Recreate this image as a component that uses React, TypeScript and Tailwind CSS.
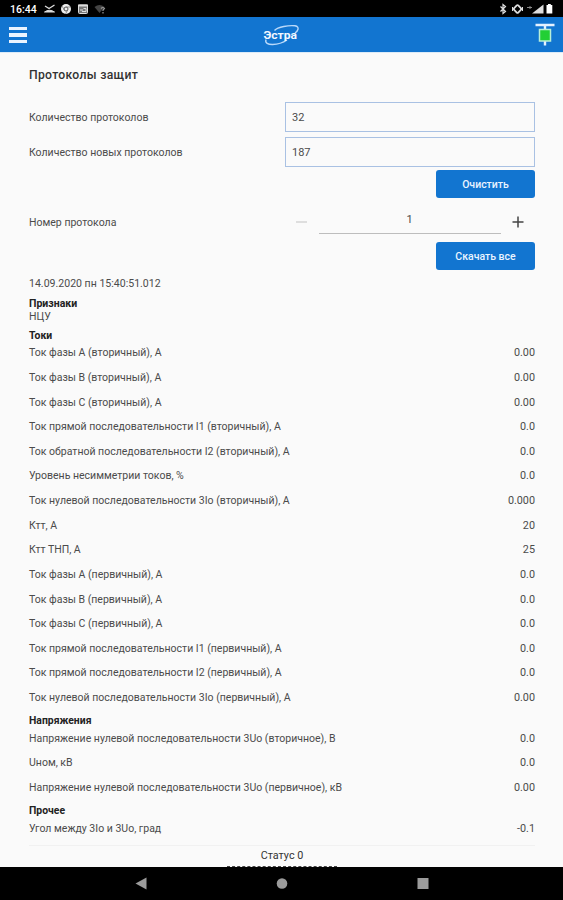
import { ReactNode } from "react";

interface Reading {
    label: string;
    value: string;
}

const currents: Reading[] = [
    { label: "Ток фазы А (вторичный), А", value: "0.00" },
    { label: "Ток фазы В (вторичный), А", value: "0.00" },
    { label: "Ток фазы С (вторичный), А", value: "0.00" },
    { label: "Ток прямой последовательности I1 (вторичный), А", value: "0.0" },
    { label: "Ток обратной последовательности I2 (вторичный), А", value: "0.0" },
    { label: "Уровень несимметрии токов, %", value: "0.0" },
    { label: "Ток нулевой последовательности 3Io (вторичный), А", value: "0.000" },
    { label: "Ктт, А", value: "20" },
    { label: "Ктт ТНП, А", value: "25" },
    { label: "Ток фазы А (первичный), А", value: "0.0" },
    { label: "Ток фазы В (первичный), А", value: "0.0" },
    { label: "Ток фазы С (первичный), А", value: "0.0" },
    { label: "Ток прямой последовательности I1 (первичный), А", value: "0.0" },
    { label: "Ток прямой последовательности I2 (первичный), А", value: "0.0" },
    { label: "Ток нулевой последовательности 3Io (первичный), А", value: "0.00" },
];

const voltages: Reading[] = [
    { label: "Напряжение нулевой последовательности 3Uo (вторичное), В", value: "0.0" },
    { label: "Uном, кВ", value: "0.0" },
    { label: "Напряжение нулевой последовательности 3Uo (первичное), кВ", value: "0.00" },
];

const other: Reading[] = [{ label: "Угол между 3Io и 3Uo, град", value: "-0.1" }];

function StatusBar() {
    return (
        <div className="flex h-[17px] shrink-0 items-center justify-between bg-black pr-[9px] pl-[10px] text-white">
            <div className="flex items-center">
                <span className="w-[33px] pt-px text-[10.5px] leading-[17px] font-medium">16:44</span>
                <svg className="h-[17px] w-[70px]" viewBox="43 0 70 17" fill="none">
                    {/* missed call */}
                    <path d="M45 6l4 2.5L54.5 5" stroke="#ddd" strokeWidth="1.3" />
                    <path d="M44.5 12q5-3.500 10 0z" fill="#ddd" stroke="#ddd" />
                    {/* browser */}
                    <circle cx="66" cy="9" r="5" fill="#eee" />
                    <circle cx="66" cy="9" r="2" fill="#eee" stroke="#555" />
                    <path d="M66 7h4.5M64.3 10l-2.300-4M67.7 10l-2.200 4" stroke="#777" strokeWidth=".8" />
                    {/* calendar card */}
                    <rect x="78.5" y="5" width="9" height="8.5" rx="1" fill="#777" stroke="#ddd" />
                    <path d="M78 5.5h10" stroke="#ddd" strokeWidth="2" />
                    <path d="M80 10h3M83.5 8.500h2.500v3h-4" stroke="#ddd" />
                    {/* weak wifi */}
                    <path d="M94.5 7q5-4 10 0l-5 6z" fill="#444" />
                    <path d="M101 8.5q2-2 3.500 0l-1.500 1.500v1M103 12v1.500" stroke="#999" strokeWidth="1.2" />
                </svg>
            </div>
            <svg className="h-[17px] w-[57px]" viewBox="497 0 57 17" fill="none">
                <path d="M500.500 6.500l5 5-2.500 2V4.500l2.500 2-5 5" stroke="#ddd" strokeWidth="1.200" />
                <rect x="514.500" y="6" width="6" height="6" rx="1" transform="rotate(45 517.500 9)" stroke="#ddd" strokeWidth="1.800" />
                <path d="M512.500 7v4M522.500 7v4" stroke="#ddd" />
                <path d="M527 7.500h5M530 6v3" stroke="#888" />
                <path d="M532 13.500L543.500 4.500v9z" fill="#ddd" />
                <path d="M546.500 5h1.500V4h2.800v1h1.500v8.500h-5.800z" fill="#fff" />
            </svg>
        </div>
    );
}

function AppBar() {
    return (
        <header className="flex h-[35px] shrink-0 items-center justify-between bg-[#1275d0] pr-[8px] pl-[9px]">
            <button className="flex w-[18px] flex-col gap-[3px] pt-px" aria-label="Меню">
                <span className="h-[3.500px] bg-[#eaf4ff]" />
                <span className="h-[3.500px] bg-[#eaf4ff]" />
                <span className="h-[3.500px] bg-[#eaf4ff]" />
            </button>
            <svg className="h-[26px] w-[44px]" viewBox="260 22 44 26" fill="none">
                <path d="M275.500 30.500C279 26.500 290 25.300 296 25.800C301.500 26.800 298.500 31.500 296 33" stroke="#b9d9fa" strokeWidth="1.400" />
                <path d="M267 39.500C264.500 46.500 280 45.500 288 40" stroke="#b9d9fa" strokeWidth="1.400" />
                <text x="264.500" y="38.700" textLength="33.500" lengthAdjust="spacingAndGlyphs" fill="#f2f8ff" fontFamily="Roboto, sans-serif" fontWeight="700" fontSize="11.500">
                    Эстра
                </text>
            </svg>
            <svg className="h-[26px] w-[20px]" viewBox="535 22 20 26" fill="none">
                <path d="M535.500 25h19M545 25v20.500" stroke="#e4f1ff" strokeWidth="2.400" />
                <rect x="539.500" y="29.500" width="11" height="11.500" fill="#22cf35" stroke="#b9eed8" strokeWidth="1.500" />
            </svg>
        </header>
    );
}

function Field({ label, value }: Reading) {
    return (
        <div className="flex h-[30px] items-center justify-between">
            <span className="pt-[2px]">{label}</span>
            <div className="flex h-[30px] w-[250px] items-center border border-[#a9c1e3] px-[6px] pt-px text-[11px]">{value}</div>
        </div>
    );
}

function ActionButton({ children }: { children: ReactNode }) {
    return (
        <button className="h-[28px] w-[99px] rounded-[3px] bg-[#1275d0] pt-px text-[10.500px] font-medium text-[#eaf4ff]">
            {children}
        </button>
    );
}

function Section({ title, rows }: { title: string; rows: Reading[] }) {
    return (
        <section>
            <h2 className="flex h-4 items-end text-[10.400px] leading-[10px] font-bold text-[#222]">{title}</h2>
            {rows.map((row) => (
                <div key={row.label} className="flex h-[24.640px] items-center justify-between">
                    <span>{row.label}</span>
                    <span className="text-[10.800px]">{row.value}</span>
                </div>
            ))}
        </section>
    );
}

function NavigationBar() {
    return (
        <nav className="flex h-[33px] shrink-0 items-center justify-center bg-black">
            <svg className="h-[33px] w-[300px]" viewBox="131.500 867 300 33" fill="#9b9b9b">
                <path d="M135 883.500l11-6v12z" />
                <circle cx="281.500" cy="883.500" r="5.300" />
                <rect x="417" y="878" width="11" height="11" />
            </svg>
        </nav>
    );
}

export default function App() {
    return (
        <div className="flex h-[900px] w-[563px] flex-col overflow-hidden bg-[#fafafa] font-['Roboto','Noto_Sans',sans-serif] text-[10.520px] leading-[12px] text-[#4b4b4b]">
            <StatusBar />
            <AppBar />
            <main className="flex min-h-0 flex-1 flex-col overflow-hidden border-t border-[#dcebf8] pr-7 pl-[29px]">
                <h1 className="mt-[15px] text-[12.200px] leading-[14px] font-medium tracking-[0.300px] text-[#333]">
                    Протоколы защит
                </h1>

                <div className="mt-5 flex flex-col gap-[5px]">
                    <Field label="Количество протоколов" value="32" />
                    <Field label="Количество новых протоколов" value="187" />
                </div>
                <div className="mt-[3px] flex justify-end">
                    <ActionButton>Очистить</ActionButton>
                </div>

                <div className="mt-[9px] flex h-[30px] items-center justify-between">
                    <span className="pt-px">Номер протокола</span>
                    <div className="flex h-[30px] w-[239px] items-center justify-between pr-[11px]">
                        <span className="h-[2px] w-[11px] bg-[#dedede]" />
                        <div className="flex h-[27px] w-[182px] items-center justify-center self-start border-b border-[#bdbdbd] text-[11px]">
                            1
                        </div>
                        <svg className="h-[12px] w-[12px]" viewBox="0 0 12 12" stroke="#444" strokeWidth="1.500">
                            <path d="M0.500 6h11M6 .5v11" />
                        </svg>
                    </div>
                </div>
                <div className="mt-[5px] flex justify-end">
                    <ActionButton>Скачать все</ActionButton>
                </div>

                <div className="mt-[7px] text-[10.550px] leading-[13px]">14.09.2020 пн 15:40:51.012</div>
                <div className="mt-[8px] h-[13px] font-bold text-[#222]">Признаки</div>
                <div className="h-[14px]">НЦУ</div>

                <Section title="Токи" rows={currents} />
                <Section title="Напряжения" rows={voltages} />
                <Section title="Прочее" rows={other} />

                <footer className="mt-[4px] flex flex-1 flex-col items-center border-t border-[#f1f1f1] pt-[4px] text-[10.800px] text-[#333]">
                    <span>Статус 0</span>
                    <span className="mt-auto w-[110px] border-b border-dashed border-[#444]" />
                </footer>
            </main>
            <NavigationBar />
        </div>
    );
}
